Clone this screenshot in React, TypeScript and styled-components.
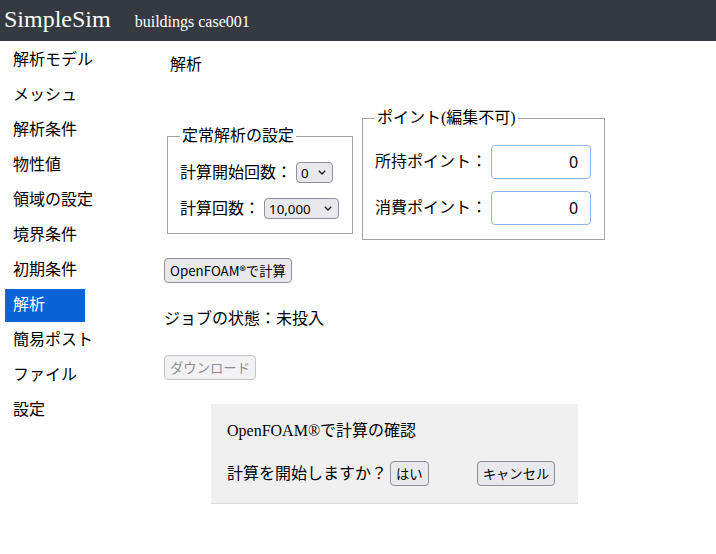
import React from "react";
import styled, { createGlobalStyle } from "styled-components";

const GlobalStyle = createGlobalStyle`
  html, body {
    margin: 0;
    padding: 0;
    background: #fff;
  }
  body {
    font-family: "Liberation Serif", "Noto Sans CJK JP", serif;
    font-size: 16px;
    color: #000;
  }
`;

const Page = styled.div`
  width: 716px;
  min-height: 554px;
`;

const Header = styled.header`
  height: 41px;
  box-sizing: border-box;
  padding: 4px 4px 0;
  background: #343a40;
  color: #fff;
  display: flex;
  align-items: baseline;
  gap: 24px;
`;

const Brand = styled.div`
  font-size: 24px;
  line-height: 30px;
`;

const CaseName = styled.div`
  font-size: 16px;
`;

const Layout = styled.div`
  display: flex;
`;

const Sidebar = styled.nav`
  width: 164px;
  flex-shrink: 0;
  box-sizing: border-box;
  padding: 3px 0 0 5px;
  display: flex;
  flex-direction: column;
  gap: 2px;
`;

const NavItem = styled.div<{ $active?: boolean }>`
  width: 80px;
  height: 33px;
  box-sizing: border-box;
  padding: 0 0 6px 8px;
  display: flex;
  align-items: center;
  white-space: nowrap;
  background: ${(p) => (p.$active ? "#0b63d8" : "transparent")};
  color: ${(p) => (p.$active ? "#fff" : "#000")};
`;

const Main = styled.main`
  flex: 1;
  padding-top: 14px;
  display: flex;
  flex-direction: column;
  align-items: flex-start;
`;

const Title = styled.div`
  margin-left: 6px;
  line-height: 19px;
`;

const FieldsetRow = styled.div`
  display: flex;
  align-items: flex-start;
  gap: 9px;
  margin-top: 33px;
  padding-left: 3px;
`;

const Fieldset = styled.fieldset<{ $top: number; $pt: number; $pb: number; $gap: number }>`
  margin: ${(p) => p.$top}px 0 0;
  padding: ${(p) => p.$pt}px 13px ${(p) => p.$pb}px 12px;
  border: 1px solid #a3a3a3;
  display: flex;
  flex-direction: column;
  gap: ${(p) => p.$gap}px;
  min-width: 0;
`;

const Legend = styled.legend`
  padding: 0 2px;
  line-height: 22px;
  white-space: nowrap;
`;

const FieldRow = styled.div<{ $h: number }>`
  height: ${(p) => p.$h}px;
  display: flex;
  align-items: center;
  gap: 4px;
`;

const Label = styled.span`
  line-height: 22px;
  white-space: nowrap;
`;

const SelectWrap = styled.span<{ $w: number }>`
  position: relative;
  display: inline-block;
  width: ${(p) => p.$w}px;
  height: 21px;
`;

const Select = styled.select`
  appearance: none;
  width: 100%;
  height: 100%;
  box-sizing: border-box;
  margin: 0;
  padding: 0 0 0 4px;
  border: 1px solid #8f8f9d;
  border-radius: 4px;
  background: #e9e9ed;
  color: #000;
  font-family: "Noto Sans", "Noto Sans CJK JP", sans-serif;
  font-size: 13.33px;
`;

const Chevron = styled.svg`
  position: absolute;
  right: 7px;
  top: 8px;
  width: 8px;
  height: 5px;
  pointer-events: none;
`;

const NumberInput = styled.input`
  width: 100px;
  height: 34px;
  box-sizing: border-box;
  margin: 0;
  padding: 0 12px;
  border: 1px solid #8bb5f5;
  border-radius: 4px;
  background: #fff;
  color: #000;
  text-align: right;
  font-family: "Noto Sans", sans-serif;
  font-size: 16px;
`;

const Button = styled.button<{ $mt?: number; $ml?: number }>`
  height: 25px;
  margin: ${(p) => p.$mt ?? 0}px 0 0 ${(p) => p.$ml ?? 0}px;
  padding: 0 5px;
  box-sizing: border-box;
  border: 1px solid #8f8f9d;
  border-radius: 4px;
  background: #e9e9ed;
  color: #000;
  font-family: "Noto Sans CJK JP", sans-serif;
  font-size: 13.33px;
  white-space: nowrap;

  &:disabled {
    color: #8d8d8d;
    background: #f2f2f4;
    border-color: #c4c4c8;
  }
`;

const Status = styled.div`
  margin-top: 25px;
  line-height: 22px;
`;

const Dialog = styled.div`
  width: 367px;
  height: 100px;
  box-sizing: border-box;
  margin: 24px 0 0 47px;
  padding: 16px 16px 0;
  background: #f0f0f0;
  border-bottom: 1px solid #dadada;
`;

const DialogTitle = styled.div`
  line-height: 22px;
`;

const DialogRow = styled.div`
  margin-top: 19px;
  height: 25px;
  display: flex;
  align-items: center;
  gap: 3px;
`;

const navItems = [
  "解析モデル",
  "メッシュ",
  "解析条件",
  "物性値",
  "領域の設定",
  "境界条件",
  "初期条件",
  "解析",
  "簡易ポスト",
  "ファイル",
  "設定",
];

const ChevronIcon = () => (
  <Chevron viewBox="0 0 8 5">
    <path d="M0.8 0.8 L4 4 L7.2 0.8" fill="none" stroke="#222" strokeWidth="1.4" />
  </Chevron>
);

const SelectBox: React.FC<{ width: number; value: string }> = ({ width, value }) => (
  <SelectWrap $w={width}>
    <Select defaultValue={value}>
      <option value={value}>{value}</option>
    </Select>
    <ChevronIcon />
  </SelectWrap>
);

export default function App() {
  return (
    <Page>
      <GlobalStyle />
      <Header>
        <Brand>SimpleSim</Brand>
        <CaseName>buildings case001</CaseName>
      </Header>
      <Layout>
        <Sidebar>
          {navItems.map((item) => (
            <NavItem key={item} $active={item === "解析"}>
              {item}
            </NavItem>
          ))}
        </Sidebar>
        <Main>
          <Title>解析</Title>
          <FieldsetRow>
            <Fieldset $top={18} $pt={12} $pb={11} $gap={9}>
              <Legend>定常解析の設定</Legend>
              <FieldRow $h={27}>
                <Label>計算開始回数：</Label>
                <SelectBox width={37} value="0" />
              </FieldRow>
              <FieldRow $h={27}>
                <Label>計算回数：</Label>
                <SelectBox width={75} value="10,000" />
              </FieldRow>
            </Fieldset>
            <Fieldset $top={0} $pt={16} $pb={14} $gap={12}>
              <Legend>ポイント(編集不可)</Legend>
              <FieldRow $h={34}>
                <Label>所持ポイント：</Label>
                <NumberInput readOnly value="0" />
              </FieldRow>
              <FieldRow $h={34}>
                <Label>消費ポイント：</Label>
                <NumberInput readOnly value="0" />
              </FieldRow>
            </Fieldset>
          </FieldsetRow>
          <Button $mt={18}>OpenFOAM®で計算</Button>
          <Status>ジョブの状態：未投入</Status>
          <Button $mt={25} disabled>
            ダウンロード
          </Button>
          <Dialog>
            <DialogTitle>OpenFOAM®で計算の確認</DialogTitle>
            <DialogRow>
              <Label>計算を開始しますか？</Label>
              <Button>はい</Button>
              <Button $ml={45}>キャンセル</Button>
            </DialogRow>
          </Dialog>
        </Main>
      </Layout>
    </Page>
  );
}
